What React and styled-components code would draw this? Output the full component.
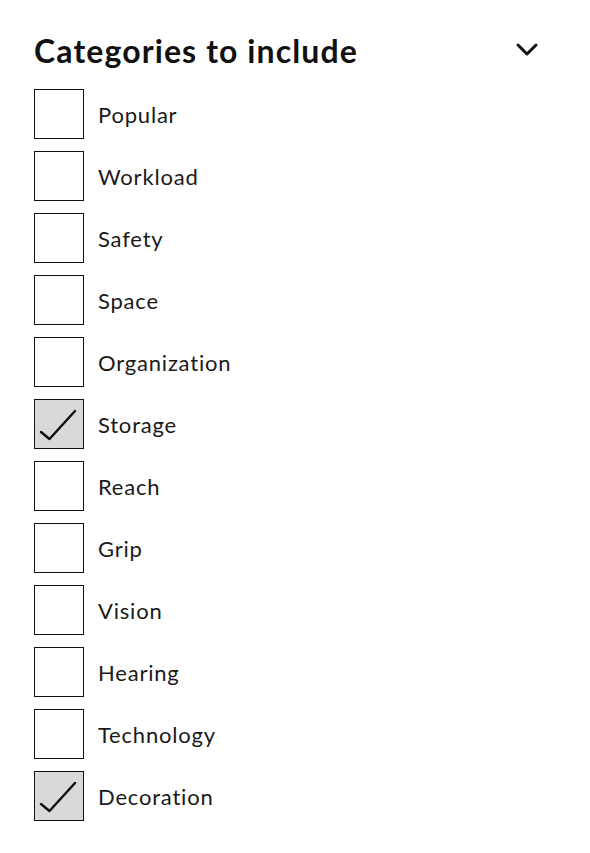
import styled, { createGlobalStyle } from "styled-components";

const GlobalStyle = createGlobalStyle`
  body {
    margin: 0;
    background: #fff;
    font-family: Lato, "Noto Sans", sans-serif;
    color: #111;
  }
`;

const Panel = styled.section`
  padding: 30px 50px 0 34px;
`;

const Header = styled.div`
  display: flex;
  align-items: center;
  justify-content: space-between;
  height: 40px;
  margin-bottom: 19px;
`;

const Title = styled.h2`
  margin: 0;
  font-size: 32px;
  font-weight: 700;
  letter-spacing: 1.1px;
  color: #111;
`;

const Chevron = styled.svg`
  width: 24px;
  height: 16px;
  margin-right: 1px;
`;

const List = styled.div`
  display: flex;
  flex-direction: column;
  gap: 12px;
`;

const Row = styled.label`
  display: flex;
  align-items: center;
  gap: 14px;
  cursor: pointer;
`;

const Box = styled.span`
  width: 48px;
  height: 48px;
  border: 1px solid #111;
  background: ${(p) => (p.checked ? "#d9d9d9" : "#fff")};
  display: flex;
  flex-shrink: 0;
`;

const Label = styled.span`
  font-size: 22px;
  color: #1a1a1a;
  letter-spacing: 0.8px;
`;

const categories = [
  { name: "Popular" },
  { name: "Workload" },
  { name: "Safety" },
  { name: "Space" },
  { name: "Organization" },
  { name: "Storage", checked: true },
  { name: "Reach" },
  { name: "Grip" },
  { name: "Vision" },
  { name: "Hearing" },
  { name: "Technology" },
  { name: "Decoration", checked: true },
];

const Check = () => (
  <svg width="48" height="48" viewBox="0 0 48 48">
    <path
      d="M6 32 L14.5 39 L40 11"
      fill="none"
      stroke="#111"
      strokeWidth="2.5"
      strokeLinecap="round"
      strokeLinejoin="round"
    />
  </svg>
);

const App = () => {
  return (
    <>
      <GlobalStyle />
      <Panel>
        <Header>
          <Title>Categories to include</Title>
          <Chevron viewBox="0 0 24 16">
            <path
              d="M3 3 L12 12 L21 3"
              fill="none"
              stroke="#111"
              strokeWidth="3"
              strokeLinecap="round"
              strokeLinejoin="round"
            />
          </Chevron>
        </Header>
        <List>
          {categories.map((c) => (
            <Row key={c.name}>
              <Box checked={c.checked}>{c.checked && <Check />}</Box>
              <Label>{c.name}</Label>
            </Row>
          ))}
        </List>
      </Panel>
    </>
  );
};

export default App;
